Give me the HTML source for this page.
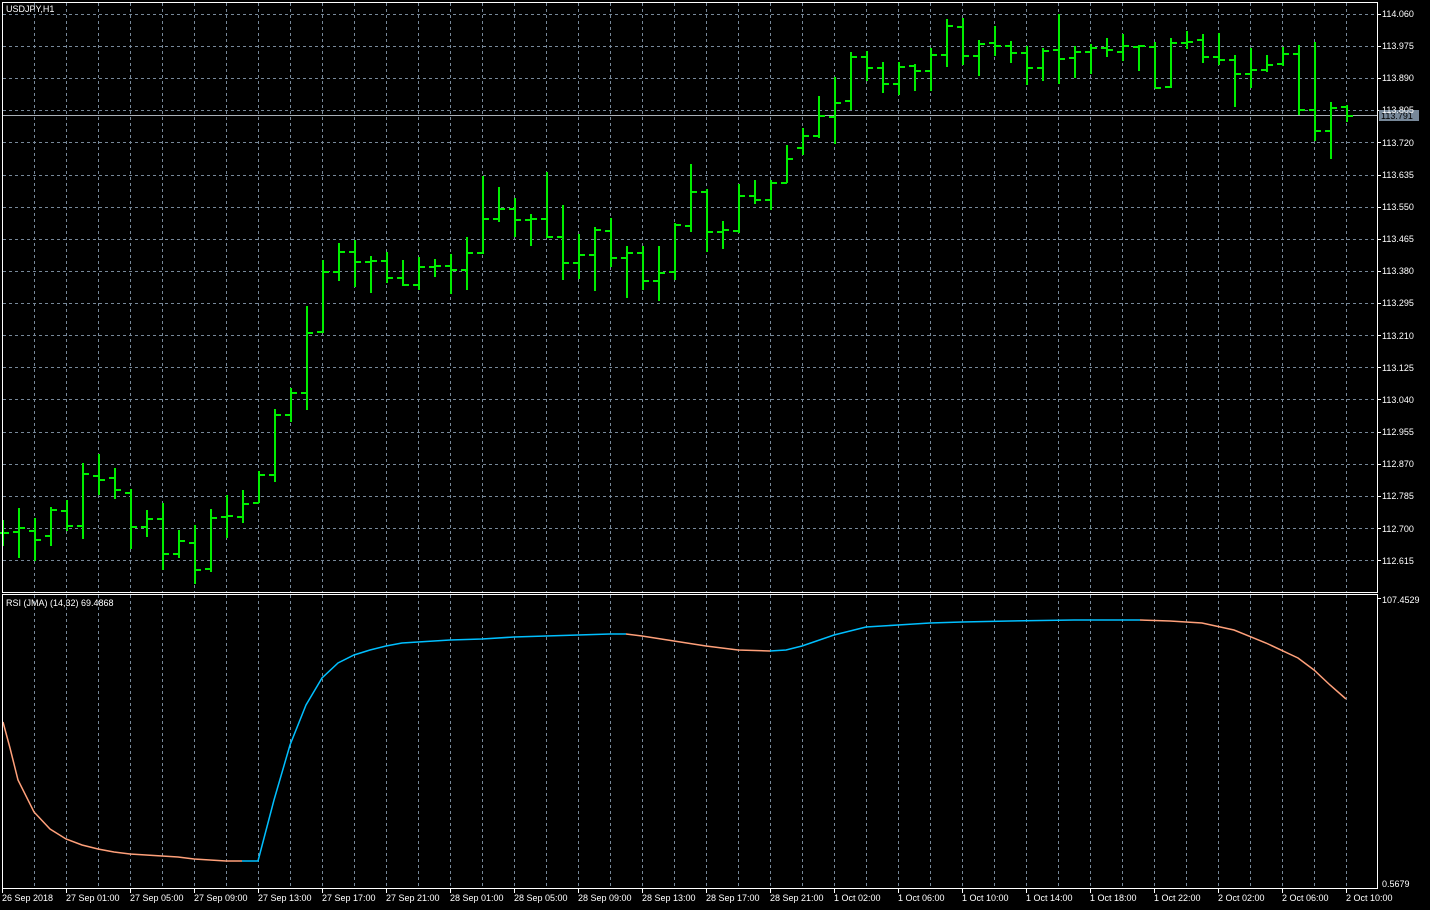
<!DOCTYPE html>
<html><head><meta charset="utf-8"><style>
html,body{margin:0;padding:0;background:#000;width:1430px;height:910px;overflow:hidden}
svg{display:block}
text{font-family:"Liberation Sans","DejaVu Sans",sans-serif;font-size:9px;fill:#fff}
</style></head><body>
<svg id="s" width="1430" height="910" xmlns="http://www.w3.org/2000/svg" shape-rendering="crispEdges">
<g id="grid" stroke="#778899" stroke-width="1" stroke-dasharray="3,3"></g>
<line x1="2" y1="115.5" x2="1377" y2="115.5" stroke="#a9b0b8" stroke-width="1"/>
<g id="bars" stroke="#00ee00" stroke-width="2"></g>
<polyline fill="none" stroke="#ffa07a" stroke-width="1.5" shape-rendering="auto" points="3,722 10,748 18,780 34,812 50,829 66,839 82,845 98,849 114,852 130,854 146,855 162,856 178,857 194,859 210,860 226,861 242,861"/>
<polyline fill="none" stroke="#00bfff" stroke-width="1.5" shape-rendering="auto" points="242,861 258,861 274,800 290,745 306,705 322,678 338,663 354,655 370,650 386,646 402,643 418,642 450,640 482,639 514,637 546,636 578,635 610,634 626,634"/>
<polyline fill="none" stroke="#ffa07a" stroke-width="1.5" shape-rendering="auto" points="626,634 642,636 674,641 706,646 738,650 770,651"/>
<polyline fill="none" stroke="#00bfff" stroke-width="1.5" shape-rendering="auto" points="770,651 786,650 802,646 834,635 866,627 898,625 930,623 962,622 1010,621 1074,620 1140,620"/>
<polyline fill="none" stroke="#ffa07a" stroke-width="1.5" shape-rendering="auto" points="1140,620 1170,621 1202,623 1234,630 1266,643 1298,658 1314,670 1330,685 1346,699"/>
<g stroke="#fff" stroke-width="1" fill="none">
<path d="M2.5,2.5 H1377.5 V592.5 H2.5 Z"/>
<path d="M2.5,594.5 H1377.5 V888.5 H2.5 Z"/>
<path d="M1377,598.5 H1381"/>
</g>
<g id="ticks" stroke="#fff" stroke-width="1"></g>
<text x="6" y="12">USDJPY,H1</text>
<text x="6" y="606" font-size="8.5">RSI (JMA) (14,32) 69.4868</text>
<g id="plabels"></g>
<rect x="1379" y="110" width="40" height="11" fill="#778899"/>
<text x="1381" y="119" style="fill:#000">113.791</text>
<text x="1382" y="603">107.4529</text>
<text x="1382" y="887">0.5679</text>
<g id="tl">
<text x="2" y="901">26 Sep 2018</text>
<text x="66" y="901">27 Sep 01:00</text>
<text x="130" y="901">27 Sep 05:00</text>
<text x="194" y="901">27 Sep 09:00</text>
<text x="258" y="901">27 Sep 13:00</text>
<text x="322" y="901">27 Sep 17:00</text>
<text x="386" y="901">27 Sep 21:00</text>
<text x="450" y="901">28 Sep 01:00</text>
<text x="514" y="901">28 Sep 05:00</text>
<text x="578" y="901">28 Sep 09:00</text>
<text x="642" y="901">28 Sep 13:00</text>
<text x="706" y="901">28 Sep 17:00</text>
<text x="770" y="901">28 Sep 21:00</text>
<text x="834" y="901">1 Oct 02:00</text>
<text x="898" y="901">1 Oct 06:00</text>
<text x="962" y="901">1 Oct 10:00</text>
<text x="1026" y="901">1 Oct 14:00</text>
<text x="1090" y="901">1 Oct 18:00</text>
<text x="1154" y="901">1 Oct 22:00</text>
<text x="1218" y="901">2 Oct 02:00</text>
<text x="1282" y="901">2 Oct 06:00</text>
<text x="1346" y="901">2 Oct 10:00</text>
</g>
<g id="plt">
<text x="1382" y="17">114.060</text><text x="1382" y="49">113.975</text><text x="1382" y="81">113.890</text><text x="1382" y="113">113.805</text><text x="1382" y="146">113.720</text><text x="1382" y="178">113.635</text><text x="1382" y="210">113.550</text><text x="1382" y="242">113.465</text><text x="1382" y="274">113.380</text><text x="1382" y="306">113.295</text><text x="1382" y="339">113.210</text><text x="1382" y="371">113.125</text><text x="1382" y="403">113.040</text><text x="1382" y="435">112.955</text><text x="1382" y="467">112.870</text><text x="1382" y="499">112.785</text><text x="1382" y="532">112.700</text><text x="1382" y="564">112.615</text>
</g>
</svg>
<script>
var ns="http://www.w3.org/2000/svg";
function L(g,x1,y1,x2,y2){var l=document.createElementNS(ns,"line");l.setAttribute("x1",x1);l.setAttribute("y1",y1);l.setAttribute("x2",x2);l.setAttribute("y2",y2);document.getElementById(g).appendChild(l);}
for(var x=34;x<1377;x+=32){L("grid",x+.5,3,x+.5,592);L("grid",x+.5,595,x+.5,888);}
for(var i=0;i<18;i++){var y=Math.round(14+i*32.12)+.5;L("grid",3,y,1377,y);L("ticks",1377,y,1381,y);}
for(var x=2;x<=1346;x+=64){L("ticks",x+.5,888,x+.5,893);}
var B=[[2,520,545,532,532],[18,508,557,531,527],[34,518,560,530,539],[50,507,545,535,509],[66,500,530,510,525],[82,463,538,525,473],[98,454,494,475,479],[114,468,498,477,489],[130,489,548,492,526],[146,510,536,526,518],[162,503,569,518,553],[178,530,557,553,540],[194,525,583,542,569],[210,509,571,568,517],[226,495,537,516,515],[242,490,522,516,503],[258,471,502,502,474],[274,409,481,474,414],[290,388,421,414,392],[306,306,409,392,332],[322,260,332,331,271],[338,243,280,271,251],[354,240,286,251,261],[370,256,292,261,260],[386,252,282,260,277],[402,260,285,277,284],[418,257,289,284,266],[434,259,276,266,265],[450,254,293,265,269],[466,237,289,269,252],[482,176,253,252,218],[498,187,221,218,208],[514,198,236,208,219],[530,214,245,219,218],[546,172,237,218,236],[562,205,279,236,262],[578,234,278,262,254],[594,227,290,254,229],[610,218,266,230,257],[626,246,297,257,252],[642,246,289,252,280],[658,246,300,280,272],[674,223,279,271,224],[690,164,231,225,191],[706,189,251,191,231],[722,221,248,231,229],[738,184,232,230,195],[754,180,203,195,199],[770,180,209,199,182],[786,145,182,182,158],[802,128,154,147,135],[818,96,137,135,115],[834,77,143,116,102],[850,52,109,100,56],[866,51,80,56,67],[882,62,92,67,83],[898,62,94,83,66],[914,64,90,65,70],[930,48,90,70,54],[946,19,66,54,25],[962,18,64,26,55],[978,40,75,55,43],[994,26,55,42,45],[1010,41,62,45,52],[1026,46,84,52,67],[1042,48,80,67,50],[1058,14,83,49,58],[1074,46,77,57,51],[1090,44,73,51,47],[1106,38,56,47,49],[1122,34,60,51,45],[1138,45,70,46,45],[1154,42,87,46,87],[1170,38,87,86,42],[1186,31,48,42,41],[1202,34,62,39,56],[1218,33,64,56,59],[1234,55,106,59,73],[1250,48,87,73,69],[1266,55,71,69,64],[1282,47,65,63,53],[1298,45,114,53,109],[1314,42,140,109,130],[1330,102,158,130,107],[1346,105,121,106,115]];
B.forEach(function(b){var x=b[0]+1;L("bars",x,b[1],x,b[2]+1);L("bars",x-6,b[3]+1,x,b[3]+1);L("bars",x,b[4]+1,x+6,b[4]+1);});
</script>
</body></html>
